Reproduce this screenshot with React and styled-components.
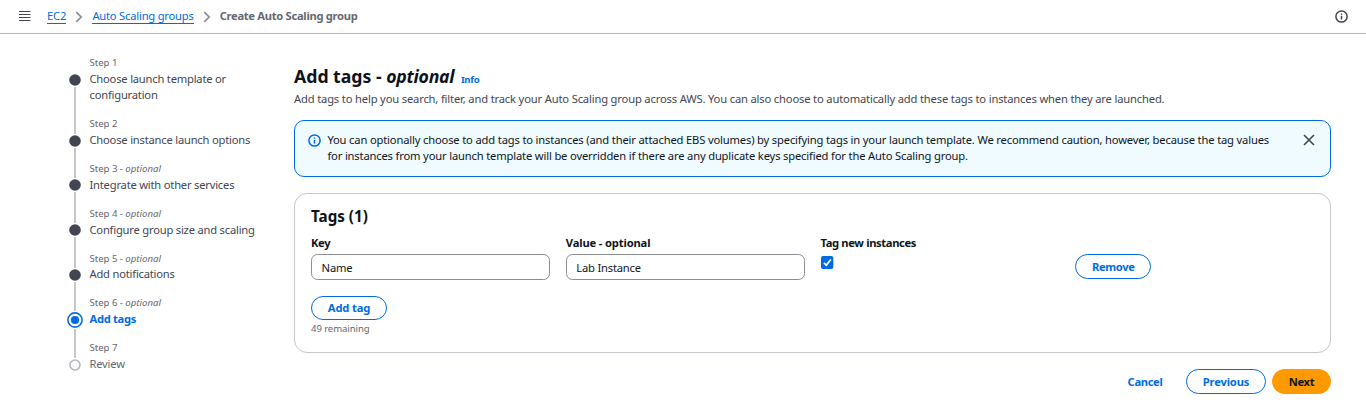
import React from 'react';
import styled, { createGlobalStyle, css } from 'styled-components';

const c = {
  text: '#0f141a',
  body: '#424650',
  muted: '#656871',
  link: '#006ce0',
  line: '#c6c6cd',
  inputLine: '#8c8c94',
};

const GlobalStyle = createGlobalStyle`
  * { box-sizing: border-box; }
  body {
    margin: 0;
    background: #fff;
    color: ${c.text};
    font-family: "Noto Sans", "Open Sans", sans-serif;
    font-size: 11.2px;
    line-height: 16px;
    letter-spacing: -0.165px;
  }
  h1, h2, p, ol { margin: 0; padding: 0; }
`;

const TopBar = styled.header`
  display: flex;
  align-items: center;
  height: 34px;
  padding: 0 18px 1px 19px;
  border-bottom: 1px solid #b4b4bb;
`;

const Crumbs = styled.nav`
  display: flex;
  align-items: center;
  flex: 1;
  margin-left: 16px;
`;

const CrumbLink = styled.a`
  color: ${c.link};
  line-height: 14px;
  border-bottom: 1px solid ${c.link};
  margin-top: 1px;
  letter-spacing: ${(p) => p.$spacing || '-0.21px'};
`;

const CrumbCurrent = styled.span`
  color: ${c.muted};
  font-weight: 700;
  letter-spacing: -0.3px;
`;

const ChevronSvg = styled.svg`
  margin: 1px 9px 0 9px;
`;

const Page = styled.div`
  display: flex;
`;

const Steps = styled.ol`
  width: 294px;
  padding: 20.4px 0 0 67px;
  list-style: none;
`;

const StepItem = styled.li`
  display: grid;
  grid-template-columns: 16px 1fr;
  column-gap: 6.5px;
`;

const Rail = styled.div`
  display: flex;
  flex-direction: column;
  align-items: center;
`;

const RailLine = styled.span`
  width: 2px;
  background: ${c.line};
  ${(p) => (p.$top ? css`height: ${p.$short ? 16.4 : 18.4}px;` : css`flex: 1;`)}
  visibility: ${(p) => (p.$hidden ? 'hidden' : 'visible')};
`;

const Marker = styled.svg`
  flex: none;
  display: block;
  margin: 1px 0;
`;

const StepText = styled.div`
  padding-bottom: 12px;
`;

const StepLabel = styled.div`
  height: 16.8px;
  color: ${c.muted};
  font-size: 9.6px;
  line-height: 17.6px;
  letter-spacing: -0.03px;

  em { letter-spacing: 0; }
`;

const StepTitle = styled.div`
  max-width: 175px;
  color: ${(p) => (p.$state === 'active' ? c.link : p.$state === 'todo' ? c.muted : c.body)};
  font-weight: ${(p) => (p.$state === 'active' ? 700 : 400)};
  letter-spacing: ${(p) => (p.$state === 'active' ? -0.32 : -0.21)}px;
`;

const Main = styled.main`
  width: 1037px;
  padding-top: 31px;
`;

const TitleRow = styled.div`
  display: flex;
  align-items: baseline;
  gap: 6.5px;
`;

const Title = styled.h1`
  font-size: 17.7px;
  line-height: 22px;
  letter-spacing: -0.02px;

  em { letter-spacing: -0.25px; }
`;

const InfoLink = styled.a`
  color: ${c.link};
  font-size: 9.6px;
  font-weight: 700;
  letter-spacing: -0.25px;
`;

const Description = styled.p`
  margin-top: 3px;
  color: ${c.body};
`;

const Alert = styled.section`
  display: flex;
  align-items: flex-start;
  height: 57px;
  margin-top: 13px;
  padding: 11px 15px 0 13px;
  border: 1px solid ${c.link};
  border-radius: 10px;
  background: #f0fbff;
`;

const AlertText = styled.p`
  flex: 1;
  margin: 0 20px 0 6.4px;
`;

const AlertIcon = styled.span`
  display: flex;
  padding-top: 2px;
`;

const CloseIcon = styled.svg`
  margin-top: 2px;
`;

const Card = styled.section`
  height: 160px;
  margin-top: 16px;
  padding: 12px 16px 0;
  border: 1px solid ${c.line};
  border-radius: 13px;
`;

const CardTitle = styled.h2`
  font-size: 15.2px;
  line-height: 20px;
  letter-spacing: 0;
`;

const TagGrid = styled.div`
  display: grid;
  grid-template-columns: repeat(4, 1fr);
  column-gap: 16px;
  margin-top: 9px;
`;

const Label = styled.div`
  height: 19px;
  line-height: 16px;
  font-weight: 700;
  letter-spacing: ${(p) => p.$spacing || '-0.35px'};
`;

const TextInput = styled.input`
  display: block;
  width: 100%;
  height: 26px;
  padding: 0 9.6px;
  border: 1px solid ${c.inputLine};
  border-radius: 6.4px;
  background: #fff;
  color: ${c.text};
  font: inherit;
  letter-spacing: -0.2px;
  outline: none;
`;

const CheckSvg = styled.svg`
  display: block;
  margin-top: 2px;
`;

const Button = styled.button`
  display: inline-flex;
  align-items: center;
  justify-content: center;
  width: ${(p) => p.$width}px;
  height: ${(p) => p.$height || 25}px;
  padding: 0;
  border: 1px solid ${(p) => (p.$kind === 'normal' ? c.link : p.$kind === 'primary' ? '#ff9900' : 'transparent')};
  border-radius: 16px;
  background: ${(p) => (p.$kind === 'primary' ? '#ff9900' : 'transparent')};
  color: ${(p) => (p.$kind === 'primary' ? c.text : c.link)};
  font: inherit;
  font-weight: 700;
  letter-spacing: ${(p) => p.$spacing || '-0.15px'};
`;

const RemoveCell = styled.div`
  padding-top: 19px;
`;

const AddRow = styled.div`
  margin-top: 16px;
  height: 24px;
  display: flex;
`;

const Remaining = styled.div`
  color: ${c.muted};
  font-size: 9.6px;
  line-height: 17px;
  letter-spacing: -0.1px;
`;

const Footer = styled.footer`
  display: flex;
  justify-content: flex-end;
  gap: 6px;
  padding-top: 16px;
`;

const InfoIcon = ({ color }) => (
  <svg width="13" height="13" viewBox="0 0 13 13" fill="none" stroke={color} strokeWidth="1.5">
    <circle cx="6.5" cy="6.5" r="5.6" />
    <path d="M6.5 5.8v3.8M6.5 3.4v1.4" />
  </svg>
);

const Chevron = () => (
  <ChevronSvg width="8" height="12" viewBox="0 0 8 12" fill="none" stroke={c.inputLine} strokeWidth="1.7">
    <path d="M1.3 1.2 6.1 6 1.3 10.8" />
  </ChevronSvg>
);

const StepMarker = ({ state }) => {
  if (state === 'active') {
    return (
      <Marker width="16" height="16" viewBox="0 0 16 16">
        <circle cx="8" cy="8" r="7.1" fill="#fff" stroke={c.link} strokeWidth="1.6" />
        <circle cx="8" cy="8" r="4.1" fill={c.link} />
      </Marker>
    );
  }
  return (
    <Marker width="12" height="12" viewBox="0 0 12 12">
      {state === 'todo' ? (
        <circle cx="6" cy="6" r="5" fill="#fff" stroke="#b4b4bb" strokeWidth="1.6" />
      ) : (
        <circle cx="6" cy="6" r="5.8" fill={c.body} />
      )}
    </Marker>
  );
};

const steps = [
  { title: 'Choose launch template or configuration', state: 'done' },
  { title: 'Choose instance launch options', state: 'done' },
  { title: 'Integrate with other services', optional: true, state: 'done' },
  { title: 'Configure group size and scaling', optional: true, state: 'done' },
  { title: 'Add notifications', optional: true, state: 'done' },
  { title: 'Add tags', optional: true, state: 'active' },
  { title: 'Review', state: 'todo' },
];

export default function App() {
  return (
    <>
      <GlobalStyle />
      <TopBar>
        <svg width="12" height="12" viewBox="0 0 12 12" stroke={c.body} strokeWidth="1.2">
          <path d="M0 1.5h11.5M0 4.5h11.5M0 7.5h11.5M0 10.5h11.5" />
        </svg>
        <Crumbs>
          <CrumbLink $spacing="-0.1px">EC2</CrumbLink>
          <Chevron />
          <CrumbLink>Auto Scaling groups</CrumbLink>
          <Chevron />
          <CrumbCurrent>Create Auto Scaling group</CrumbCurrent>
        </Crumbs>
        <InfoIcon color={c.body} />
      </TopBar>
      <Page>
        <Steps>
          {steps.map((step, i) => (
            <StepItem key={step.title}>
              <Rail>
                <RailLine $top $short={step.state === 'active'} $hidden={i === 0} />
                <StepMarker state={step.state} />
                <RailLine $hidden={i === steps.length - 1} />
              </Rail>
              <StepText>
                <StepLabel>
                  Step {i + 1}
                  {step.optional && (
                    <>
                      {' - '}
                      <em>optional</em>
                    </>
                  )}
                </StepLabel>
                <StepTitle $state={step.state}>{step.title}</StepTitle>
              </StepText>
            </StepItem>
          ))}
        </Steps>
        <Main>
          <TitleRow>
            <Title>
              Add tags - <em>optional</em>
            </Title>
            <InfoLink>Info</InfoLink>
          </TitleRow>
          <Description>
            Add tags to help you search, filter, and track your Auto Scaling group across AWS. You can also choose to
            automatically add these tags to instances when they are launched.
          </Description>
          <Alert>
            <AlertIcon>
              <InfoIcon color={c.link} />
            </AlertIcon>
            <AlertText>
              You can optionally choose to add tags to instances (and their attached EBS volumes) by specifying tags in
              your launch template. We recommend caution, however, because the tag values for instances from your launch
              template will be overridden if there are any duplicate keys specified for the Auto Scaling group.
            </AlertText>
            <CloseIcon width="12" height="12" viewBox="0 0 12 12" stroke={c.body} strokeWidth="1.6">
              <path d="M1 1l10 10M11 1 1 11" />
            </CloseIcon>
          </Alert>
          <Card>
            <CardTitle>Tags (1)</CardTitle>
            <TagGrid>
              <div>
                <Label>Key</Label>
                <TextInput defaultValue="Name" />
              </div>
              <div>
                <Label $spacing="-0.15px">Value - optional</Label>
                <TextInput defaultValue="Lab Instance" />
              </div>
              <div>
                <Label>Tag new instances</Label>
                <CheckSvg width="13" height="13" viewBox="0 0 13 13" fill="none">
                  <rect width="12.3" height="13" rx="2" fill={c.link} />
                  <path d="M2.9 6.8 5.3 9.2 9.8 3.4" stroke="#fff" strokeWidth="1.7" />
                </CheckSvg>
              </div>
              <RemoveCell>
                <Button $kind="normal" $width={76} $spacing="-0.35px">Remove</Button>
              </RemoveCell>
            </TagGrid>
            <AddRow>
              <Button $kind="normal" $width={76} $height={24}>Add tag</Button>
            </AddRow>
            <Remaining>49 remaining</Remaining>
          </Card>
          <Footer>
            <Button $kind="link" $width={70} $spacing="-0.35px">Cancel</Button>
            <Button $kind="normal" $width={80}>Previous</Button>
            <Button $kind="primary" $width={59} $spacing="-0.3px">Next</Button>
          </Footer>
        </Main>
      </Page>
    </>
  );
}
